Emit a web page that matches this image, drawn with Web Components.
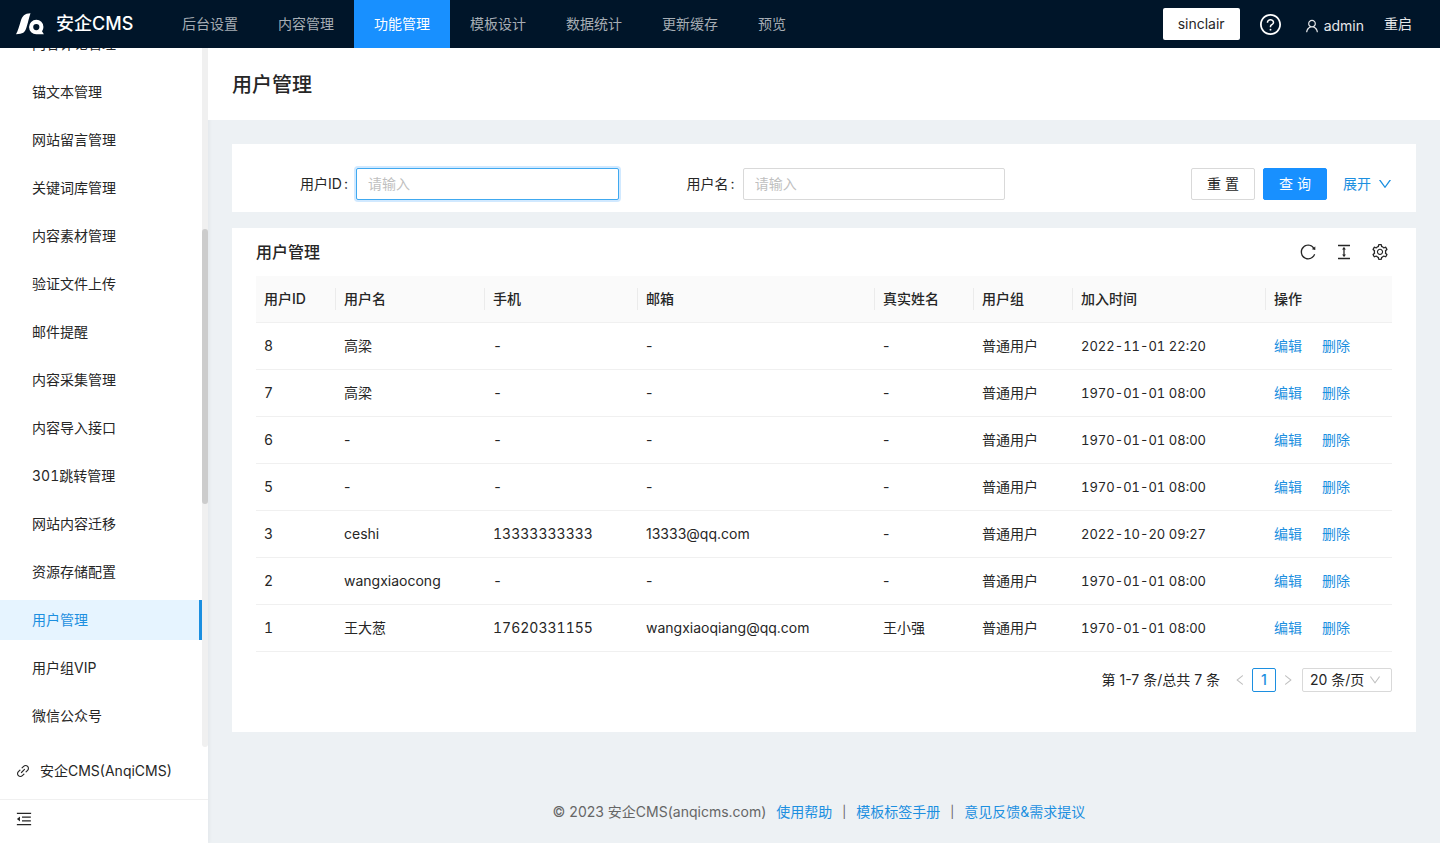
<!DOCTYPE html>
<html lang="zh-CN">
<head>
<meta charset="utf-8">
<meta name="viewport" content="width=device-width, initial-scale=1">
<title>用户管理 - 安企CMS</title>
<style>
  html, body { margin: 0; height: 100%; }
  body {
    --primary: #1890ff;
    --link: #1c8fe0;
    --text: #262626;
    --line: #f0f0f0;
    --page: #edf1f4;
    font: 14px/22px Inter, "Noto Sans CJK SC", sans-serif;
    color: var(--text);
    background: var(--page);
  }
</style>
</head>
<body>
<admin-app></admin-app>

<script>
const ICONS = {
  down: 'M884 256h-75c-5.1 0-9.9 2.5-12.9 6.6L512 654.2 227.9 262.6c-3-4.1-7.8-6.6-12.9-6.6h-75c-6.5 0-10.3 7.4-6.5 12.7l352.6 486.1c12.8 17.6 39 17.6 51.7 0l352.6-486.1c3.9-5.3.1-12.7-6.4-12.7z',
  left: 'M724 218.3V141c0-6.7-7.7-10.4-12.9-6.3L260.3 486.8a31.86 31.86 0 000 50.3l450.8 352.1c5.3 4.1 12.9.4 12.9-6.3v-77.3c0-4.9-2.3-9.6-6.1-12.6l-360-281 360-281.1c3.8-3 6.1-7.7 6.1-12.6z',
  right: 'M765.7 486.8L314.9 134.7A7.97 7.97 0 00302 141v77.3c0 4.9 2.3 9.6 6.1 12.6l360 281.1-360 281.1c-3.9 3-6.1 7.7-6.1 12.6V883c0 6.7 7.7 10.4 12.9 6.3l450.8-352.1a31.96 31.96 0 000-50.4z',
  reload: 'M909.1 209.3l-56.4 44.1C775.8 155.1 656.2 92 521.9 92 290 92 102.3 279.5 102 511.5 101.7 743.7 289.8 932 521.9 932c181.3 0 335.8-115 394.6-276.1 1.5-4.2-.7-8.9-4.9-10.3l-56.7-19.5a8 8 0 00-10.1 4.8c-1.8 5-3.8 10-5.9 14.9-17.3 41-42.1 77.8-73.7 109.4A344.77 344.77 0 01655.9 829c-42.3 17.9-87.4 27-133.8 27-46.5 0-91.5-9.1-133.8-27A341.5 341.5 0 01279 755.2a342.16 342.16 0 01-73.7-109.4c-17.9-42.4-27-87.4-27-133.9s9.1-91.5 27-133.9c17.3-41 42.1-77.8 73.7-109.4 31.6-31.6 68.4-56.4 109.3-73.8 42.3-17.9 87.4-27 133.8-27 46.5 0 91.5 9.1 133.8 27a341.5 341.5 0 01109.3 73.8c9.9 9.9 19.2 20.4 27.8 31.4l-60.2 47a8 8 0 003 14.1l175.6 43c5 1.2 9.9-2.6 9.9-7.7l.8-180.9c-.1-6.6-7.8-10.3-13-6.2z',
  height: 'M840 836H184c-4.4 0-8 3.6-8 8v60c0 4.4 3.6 8 8 8h656c4.4 0 8-3.6 8-8v-60c0-4.4-3.6-8-8-8zm0-724H184c-4.4 0-8 3.6-8 8v60c0 4.4 3.6 8 8 8h656c4.4 0 8-3.6 8-8v-60c0-4.4-3.6-8-8-8zM610.8 378c6 0 9.4-7 5.7-11.7L515.7 238.7a7.14 7.14 0 00-11.3 0L403.6 366.3a7.23 7.23 0 005.7 11.7H476v268h-62.8c-6 0-9.4 7-5.7 11.7l100.8 127.5c2.9 3.7 8.5 3.7 11.3 0l100.8-127.5c3.7-4.7.4-11.7-5.7-11.7H548V378h62.8z',
  setting: 'M924.8 625.7l-65.5-56c3.1-19 4.7-38.4 4.7-57.8s-1.6-38.8-4.7-57.8l65.5-56a32.03 32.03 0 009.3-35.2l-.9-2.6a443.74 443.74 0 00-79.7-137.9l-1.8-2.1a32.12 32.12 0 00-35.1-9.5l-81.3 28.9c-30-24.6-63.5-44-99.7-57.6l-15.7-85a32.05 32.05 0 00-25.8-25.7l-2.7-.5c-52.1-9.4-106.9-9.4-159 0l-2.7.5a32.05 32.05 0 00-25.8 25.7l-15.8 85.4a351.86 351.86 0 00-99 57.4l-81.9-29.1a32 32 0 00-35.1 9.5l-1.8 2.1a446.02 446.02 0 00-79.7 137.9l-.9 2.6c-4.5 12.5-.8 26.5 9.3 35.2l66.3 56.6c-3.1 18.8-4.6 38-4.6 57.1 0 19.2 1.5 38.4 4.6 57.1L99 625.5a32.03 32.03 0 00-9.3 35.2l.9 2.6c18.1 50.4 44.9 96.9 79.7 137.9l1.8 2.1a32.12 32.12 0 0035.1 9.5l81.9-29.1c29.8 24.5 63.1 43.9 99 57.4l15.8 85.4a32.05 32.05 0 0025.8 25.7l2.7.5a449.4 449.4 0 00159 0l2.7-.5a32.05 32.05 0 0025.8-25.7l15.7-85a350 350 0 0099.7-57.6l81.3 28.9a32 32 0 0035.1-9.5l1.8-2.1c34.8-41.1 61.6-87.5 79.7-137.9l.9-2.6c4.5-12.3.8-26.3-9.3-35zM788.3 465.9c2.5 15.1 3.8 30.6 3.8 46.1s-1.3 31-3.8 46.1l-6.6 40.1 74.7 63.9a370.03 370.03 0 01-42.6 73.6L721 702.8l-31.4 25.8c-23.9 19.6-50.5 35-79.3 45.8l-38.1 14.3-17.9 97a377.5 377.5 0 01-85 0l-17.9-97.2-37.8-14.5c-28.5-10.8-55-26.2-78.7-45.7l-31.4-25.9-93.4 33.2c-17-22.9-31.2-47.6-42.6-73.6l75.5-64.5-6.5-40c-2.4-14.9-3.7-30.3-3.7-45.5 0-15.3 1.2-30.6 3.7-45.5l6.5-40-75.5-64.5c11.3-26.1 25.6-50.7 42.6-73.6l93.4 33.2 31.4-25.9c23.7-19.5 50.2-34.9 78.7-45.7l37.9-14.3 17.9-97.2c28.1-3.2 56.8-3.2 85 0l17.9 97 38.1 14.3c28.7 10.8 55.4 26.2 79.3 45.8l31.4 25.8 92.8-32.9c17 22.9 31.2 47.6 42.6 73.6L781.8 426l6.5 39.9zM512 326c-97.2 0-176 78.8-176 176s78.8 176 176 176 176-78.8 176-176-78.8-176-176-176zm79.2 255.2A111.6 111.6 0 01512 614c-29.9 0-58-11.7-79.2-32.8A111.6 111.6 0 01400 502c0-29.9 11.7-58 32.8-79.2C454 401.6 482.1 390 512 390c29.9 0 58 11.6 79.2 32.8A111.6 111.6 0 01624 502c0 29.9-11.7 58-32.8 79.2z',
  user: 'M858.5 763.6a374 374 0 00-80.6-119.5 375.63 375.63 0 00-119.5-80.6c-.4-.2-.8-.3-1.2-.5C719.5 518 760 444.7 760 362c0-137-111-248-248-248S264 225 264 362c0 82.7 40.5 156 102.8 201.1-.4.2-.8.3-1.2.5-44.8 18.9-85 46-119.5 80.6a375.63 375.63 0 00-80.6 119.5A371.7 371.7 0 00136 901.8a8 8 0 008 8.2h60c4.4 0 7.9-3.5 8-7.8 2-77.2 33-149.5 87.8-204.3 56.7-56.7 132-87.9 212.2-87.9s155.5 31.2 212.2 87.9C779 752.7 810 825 812 902.2c.1 4.4 3.6 7.8 8 7.8h60a8 8 0 008-8.2c-1-47.8-10.9-94.3-29.5-138.2zM512 534c-45.9 0-89.1-17.9-121.6-50.4S340 407.9 340 362c0-45.9 17.9-89.1 50.4-121.6S466.1 190 512 190s89.1 17.9 121.6 50.4S684 316.1 684 362c0 45.9-17.9 89.1-50.4 121.6S557.9 534 512 534z',
  help: 'M512 64C264.6 64 64 264.6 64 512s200.6 448 448 448 448-200.6 448-448S759.4 64 512 64zm0 820c-205.4 0-372-166.6-372-372s166.6-372 372-372 372 166.6 372 372-166.6 372-372 372zM623.6 316.7C593.6 290.4 554 276 512 276s-81.6 14.5-111.6 40.7C369.2 344 352 380.7 352 420v7.6c0 4.4 3.6 8 8 8h48c4.4 0 8-3.6 8-8V420c0-44.1 43.1-80 96-80s96 35.9 96 80c0 31.1-22 59.6-56.1 72.7-21.2 8.1-39.2 22.3-52.1 40.9-13.1 19-19.9 41.8-19.9 64.9V620c0 4.4 3.6 8 8 8h48c4.4 0 8-3.6 8-8v-22.7a48.3 48.3 0 0130.9-44.8c59-22.7 97.1-74.7 97.1-132.5.1-39.3-17.1-76-48.3-103.3zM472 732a40 40 0 1080 0 40 40 0 10-80 0z',
  link: 'M574 665.4a8.03 8.03 0 00-11.3 0L446.5 781.6c-53.8 53.8-144.6 59.5-204 0-59.5-59.5-53.8-150.2 0-204l116.2-116.2c3.1-3.1 3.1-8.2 0-11.3l-39.8-39.8a8.03 8.03 0 00-11.3 0L191.4 526.5c-84.6 84.6-84.6 221.5 0 306s221.5 84.6 306 0l116.2-116.2c3.1-3.1 3.1-8.2 0-11.3L574 665.4zm258.6-474c-84.6-84.6-221.5-84.6-306 0L410.3 307.6a8.03 8.03 0 000 11.3l39.7 39.7c3.1 3.1 8.2 3.1 11.3 0l116.2-116.2c53.8-53.8 144.6-59.5 204 0 59.5 59.5 53.8 150.2 0 204L665.3 562.6a8.03 8.03 0 000 11.3l39.8 39.8c3.1 3.1 8.2 3.1 11.3 0l116.2-116.2c84.5-84.6 84.5-221.5 0-306.1zM610.1 372.3a8.03 8.03 0 00-11.3 0L372.3 598.7a8.03 8.03 0 000 11.3l39.6 39.6c3.1 3.1 8.2 3.1 11.3 0l226.4-226.4c3.1-3.1 3.1-8.2 0-11.3l-39.5-39.6z',
  fold: 'M408 442h480c4.4 0 8-3.6 8-8v-56c0-4.4-3.6-8-8-8H408c-4.4 0-8 3.6-8 8v56c0 4.4 3.6 8 8 8zm-8 204c0 4.4 3.6 8 8 8h480c4.4 0 8-3.6 8-8v-56c0-4.4-3.6-8-8-8H408c-4.4 0-8 3.6-8 8v56zm504-486H120c-4.4 0-8 3.6-8 8v56c0 4.4 3.6 8 8 8h784c4.4 0 8-3.6 8-8v-56c0-4.4-3.6-8-8-8zm0 632H120c-4.4 0-8 3.6-8 8v56c0 4.4 3.6 8 8 8h784c4.4 0 8-3.6 8-8v-56c0-4.4-3.6-8-8-8zM115.4 518.9L271.7 642c5.8 4.6 14.4.5 14.4-6.9V388.9c0-7.4-8.5-11.5-14.4-6.9L115.4 505.1a8.74 8.74 0 000 13.8z'
};

const BASE = `
  * { box-sizing: border-box; }
  a { color: inherit; text-decoration: none; }
  button { font: inherit; color: inherit; border: 0; background: none; padding: 0; cursor: pointer; }
  h1, h2, p { margin: 0; font-weight: 500; }
`;

// Registers an element whose shadow root is built from a style sheet and a markup function.
function define(name, css, html) {
  customElements.define(name, class extends HTMLElement {
    connectedCallback() {
      if (this.shadowRoot) return;
      this.attachShadow({ mode: 'open' }).innerHTML = `<style>${BASE}${css}</style>${html(this)}`;
    }
  });
}

define('ui-icon', `
  :host { display: inline-flex; flex: none; width: var(--size, 14px); height: var(--size, 14px); }
  svg { width: 100%; height: 100%; fill: currentColor; }
`, el => `<svg viewBox="64 64 896 896" aria-hidden="true"><path d="${ICONS[el.getAttribute('name')]}"/></svg>`);

define('brand-logo', `
  :host { display: block; width: 116px; }
  a { display: flex; align-items: center; gap: 12px; color: #fff; font-size: 18px; line-height: 32px; font-weight: 500; white-space: nowrap; }
  svg { flex: none; width: 28px; height: 22px; }
`, () => `
  <a href="#">
    <svg viewBox="0 0 28 22" aria-hidden="true">
      <path fill="#fff" d="M0 21.200C2 18 3.200 13 4.600 8.500C6.400 3 8.500 .3 14.500 .3C13.200 4 12.200 9 10.600 14C8.900 19.500 7 21.200 0 21.200Z"/>
      <path fill="#fff" fill-rule="evenodd" d="M20.300 6.800a7 7 0 0 1 7.100 7c0 1.700-.5 3.200-1.400 4.400l1.900 3.100h-7.600a7.200 7.200 0 0 1 0-14.500Zm0 4.200a3.100 3.100 0 1 0 0 6.200a3.100 3.100 0 0 0 0-6.200Z"/>
    </svg>
    <slot></slot>
  </a>`);

define('nav-item', `
  :host { display: block; }
  a { display: block; padding: 0 20px; line-height: 48px; color: #a6adb4; }
  :host([active]) a { background: var(--primary); color: #fff; }
`, () => `<a href="#"><slot></slot></a>`);

define('app-header', `
  :host { display: flex; align-items: center; height: 48px; flex: none; padding: 0 28px 0 16px; background: #001529; color: #e6e8ea; }
  nav { display: flex; flex: 1; margin-left: 30px; }
  .tools { display: flex; align-items: center; gap: 20px; }
  .site { height: 32px; padding: 0 15px; background: #fff; color: var(--text); border-radius: 2px; }
  .help { display: flex; --size: 21px; color: #fff; }
  .user { display: flex; align-items: center; gap: 5px; margin-left: 4px; padding-top: 3px; }
`, () => `
  <brand-logo>安企CMS</brand-logo>
  <nav>
    ${['后台设置', '内容管理', '功能管理', '模板设计', '数据统计', '更新缓存', '预览']
      .map(t => `<nav-item${t === '功能管理' ? ' active' : ''}>${t}</nav-item>`).join('')}
  </nav>
  <div class="tools">
    <button class="site">sinclair</button>
    <button class="help" aria-label="帮助"><ui-icon name="help"></ui-icon></button>
    <button class="user"><ui-icon name="user"></ui-icon>admin</button>
    <button>重启</button>
  </div>`);

define('side-item', `
  :host { display: block; flex: none; font-variant-numeric: tabular-nums; }
  a { display: block; padding-left: 32px; line-height: 40px; border-right: 3px solid transparent; }
  :host([active]) a { background: #e6f4ff; color: var(--link); border-color: var(--link); }
`, () => `<a href="#"><slot></slot></a>`);

define('app-sidebar', `
  :host { display: flex; flex-direction: column; width: 208px; flex: none; min-height: 0; background: #fff; box-shadow: 1px 0 4px rgba(0, 21, 41, .05); }
  .scroll { display: flex; flex: 1; min-height: 0; }
  nav { display: flex; flex: 1; flex-direction: column; justify-content: flex-end; gap: 8px; padding-bottom: 11px; overflow: hidden; }
  .track { display: grid; grid-template-rows: 181fr 275fr 243fr; width: 6px; background: #f0f0f0; border-radius: 0 0 3px 3px; }
  .thumb { grid-row: 2; background: #ccc; border-radius: 3px; }
  .site { display: flex; align-items: center; gap: 10px; height: 52px; padding: 0 16px 4px; }
  .fold { display: flex; align-items: center; height: 44px; padding: 0 16px 6px; border-top: 1px solid var(--line); --size: 16px; }
`, () => `
  <div class="scroll">
    <nav>
      ${['内容评论管理', '锚文本管理', '网站留言管理', '关键词库管理', '内容素材管理', '验证文件上传', '邮件提醒',
         '内容采集管理', '内容导入接口', '301跳转管理', '网站内容迁移', '资源存储配置', '用户管理', '用户组VIP', '微信公众号']
        .map(t => `<side-item${t === '用户管理' ? ' active' : ''}>${t}</side-item>`).join('')}
    </nav>
    <div class="track"><div class="thumb"></div></div>
  </div>
  <a class="site" href="#"><ui-icon name="link"></ui-icon>安企CMS(AnqiCMS)</a>
  <button class="fold" aria-label="收起菜单"><ui-icon name="fold"></ui-icon></button>`);

define('form-field', `
  :host { display: flex; align-items: center; }
  label { display: flex; justify-content: flex-end; gap: 2px; width: 100px; flex: none; padding-right: 8px; }
  input { flex: 1; min-width: 0; height: 32px; padding: 0 11px 2px; font: inherit; color: inherit; border: 1px solid #d9d9d9; border-radius: 2px; outline: 0; background: #fff; }
  input::placeholder { color: #bfbfbf; opacity: 1; }
  :host([highlighted]) input { border-color: #40a9f0; box-shadow: 0 0 0 2px rgba(24, 144, 255, .2); }
`, el => `
  <label for="field"><span>${el.getAttribute('label')}</span><span>:</span></label>
  <input id="field" type="text" placeholder="请输入">`);

define('search-form', `
  :host { display: block; padding: 24px 24px 12px; background: #fff; }
  form { display: grid; grid-template-columns: repeat(3, minmax(0, 1fr)); gap: 24px; }
  .actions { display: flex; justify-content: flex-end; align-items: center; gap: 8px; }
  .btn { width: 64px; height: 32px; border: 1px solid #d9d9d9; border-radius: 2px; }
  .primary { background: var(--primary); border-color: var(--primary); color: #fff; }
  .more { display: flex; align-items: center; gap: 7px; margin-left: 8px; color: var(--link); }
`, () => `
  <form>
    <form-field label="用户ID" highlighted></form-field>
    <form-field label="用户名"></form-field>
    <div class="actions">
      <button type="reset" class="btn">重 置</button>
      <button type="button" class="btn primary">查 询</button>
      <a class="more" href="#">展开<ui-icon name="down"></ui-icon></a>
    </div>
  </form>`);

const COLUMNS = [['用户ID', 80], ['用户名', 149], ['手机', 153], ['邮箱', 237], ['真实姓名', 99], ['用户组', 99], ['加入时间', 193], ['操作', 126]];
const CELL_CLASS = ['num', '', 'num', '', '', '', 'date'];
const USERS = [
  ['8', '高梁', '-', '-', '-', '普通用户', '2022-11-01 22:20'],
  ['7', '高梁', '-', '-', '-', '普通用户', '1970-01-01 08:00'],
  ['6', '-', '-', '-', '-', '普通用户', '1970-01-01 08:00'],
  ['5', '-', '-', '-', '-', '普通用户', '1970-01-01 08:00'],
  ['3', 'ceshi', '13333333333', '13333@qq.com', '-', '普通用户', '2022-10-20 09:27'],
  ['2', 'wangxiaocong', '-', '-', '-', '普通用户', '1970-01-01 08:00'],
  ['1', '王大葱', '17620331155', 'wangxiaoqiang@qq.com', '王小强', '普通用户', '1970-01-01 08:00']
];

define('user-table', `
  :host { display: block; }
  table { width: 100%; table-layout: fixed; border-collapse: separate; border-spacing: 0; }
  th, td { height: 47px; padding: 0 8px; text-align: left; border-bottom: 1px solid var(--line); white-space: nowrap; }
  th { font-weight: 500; background: #fafafa; }
  th:not(:last-child) { background: linear-gradient(#ebebeb, #ebebeb) no-repeat right center / 1px 22px #fafafa; }
  .num, .date { font-variant-numeric: tabular-nums; }
  .date { font-size: 13px; }
  .ops { display: flex; gap: 20px; color: var(--link); }
`, () => `
  <table>
    <colgroup>${COLUMNS.map(c => `<col style="width:${c[1]}px">`).join('')}</colgroup>
    <thead><tr>${COLUMNS.map(c => `<th scope="col">${c[0]}</th>`).join('')}</tr></thead>
    <tbody>${USERS.map(u => `<tr>${u.map((v, i) => `<td class="${CELL_CLASS[i]}">${v}</td>`).join('')}<td><div class="ops"><a href="#">编辑</a><a href="#">删除</a></div></td></tr>`).join('')}</tbody>
  </table>`);

define('page-pager', `
  :host { display: flex; justify-content: flex-end; align-items: center; margin-top: 16px; line-height: 24px; }
  .total { margin-right: 8px; }
  .step { display: flex; align-items: center; justify-content: center; width: 24px; height: 24px; color: #bfbfbf; --size: 12px; }
  .page { width: 24px; height: 24px; border: 1px solid var(--link); border-radius: 2px; color: var(--link); line-height: 22px; font-weight: 500; text-align: center; }
  .size { display: grid; width: 90px; height: 24px; margin-left: 2px; }
  .size > * { grid-area: 1 / 1; }
  select { appearance: none; width: 100%; height: 24px; padding: 0 7px; font: inherit; line-height: 22px; color: inherit; background: #fff; border: 1px solid #d9d9d9; border-radius: 2px; }
  .size ui-icon { --size: 12px; place-self: center end; margin-right: 11px; color: #bfbfbf; pointer-events: none; }
`, () => `
  <span class="total">第 1-7 条/总共 7 条</span>
  <button class="step" aria-label="上一页" disabled><ui-icon name="left"></ui-icon></button>
  <a class="page" href="#" aria-current="page">1</a>
  <button class="step" aria-label="下一页" disabled><ui-icon name="right"></ui-icon></button>
  <div class="size">
    <select aria-label="每页条数"><option>20 条/页</option></select>
    <ui-icon name="down"></ui-icon>
  </div>`);

define('table-card', `
  :host { display: block; padding: 0 24px 40px; background: #fff; }
  header { display: flex; align-items: center; justify-content: space-between; height: 48px; padding-right: 4px; }
  h2 { font-size: 16px; line-height: 24px; }
  .tools { display: flex; gap: 20px; --size: 16px; }
  .tools button { display: flex; }
`, el => `
  <header>
    <h2>${el.getAttribute('heading')}</h2>
    <div class="tools">
      <button aria-label="刷新"><ui-icon name="reload"></ui-icon></button>
      <button aria-label="密度"><ui-icon name="height"></ui-icon></button>
      <button aria-label="列设置"><ui-icon name="setting"></ui-icon></button>
    </div>
  </header>
  <slot></slot>`);

define('page-footer', `
  :host { display: flex; justify-content: center; gap: 10px; padding: 0 10px 20px 0; color: #666; }
  a { color: var(--link); }
  .bar { font-size: 12px; }
`, () => `
  <span>© 2023 安企CMS(anqicms.com)</span>
  <a href="#">使用帮助</a><span class="bar">|</span>
  <a href="#">模板标签手册</a><span class="bar">|</span>
  <a href="#">意见反馈&amp;需求提议</a>`);

define('admin-app', `
  :host { display: flex; flex-direction: column; height: 100vh; overflow: hidden; }
  .body { display: flex; flex: 1; min-height: 0; }
  main { display: flex; flex: 1; flex-direction: column; min-width: 0; overflow: auto; }
  .title { padding: 21px 24px 19px; background: #fff; }
  h1 { font-size: 20px; line-height: 32px; }
  .content { display: flex; flex: 1 0 auto; flex-direction: column; gap: 16px; padding: 24px; }
`, () => `
  <app-header></app-header>
  <div class="body">
    <app-sidebar></app-sidebar>
    <main>
      <div class="title"><h1>用户管理</h1></div>
      <div class="content">
        <search-form></search-form>
        <table-card heading="用户管理">
          <user-table></user-table>
          <page-pager></page-pager>
        </table-card>
      </div>
      <page-footer></page-footer>
    </main>
  </div>`);
</script>
</body>
</html>
